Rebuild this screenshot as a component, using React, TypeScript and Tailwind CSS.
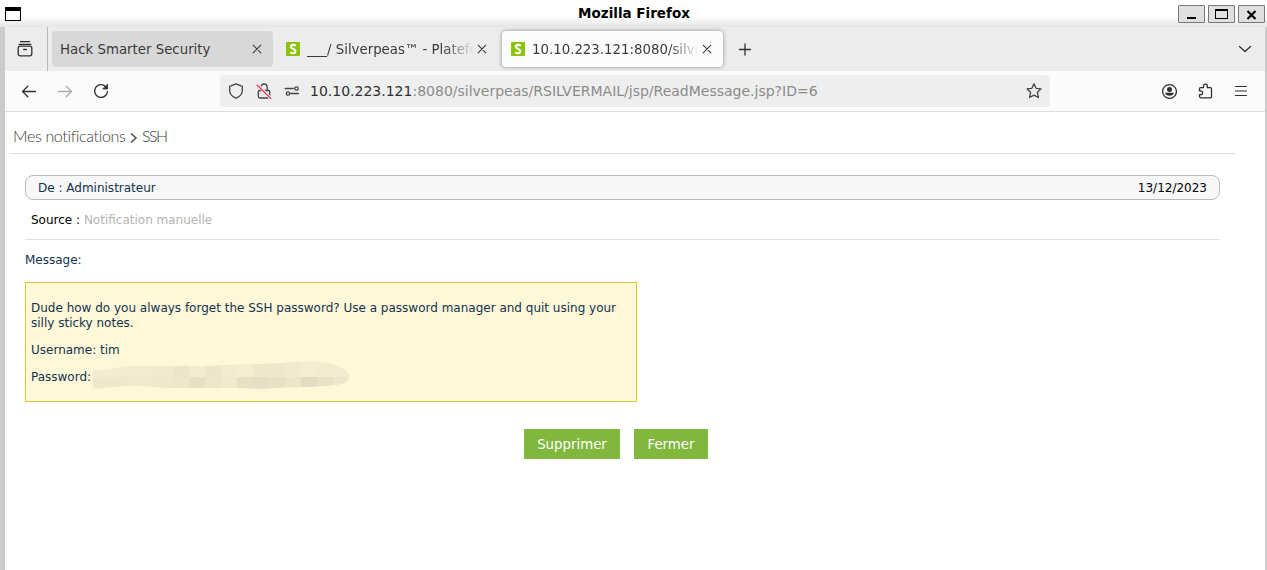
import type { ReactNode } from "react";

function Icon({ children, className = "", size = 16 }: { children: ReactNode; className?: string; size?: number }) {
  return (
    <svg
      width={size}
      height={size}
      viewBox="0 0 16 16"
      fill="none"
      stroke="currentColor"
      strokeWidth="1.3"
      strokeLinecap="round"
      strokeLinejoin="round"
      className={"shrink-0 " + className}
    >
      {children}
    </svg>
  );
}

function CloseIcon() {
  return (
    <Icon className="text-[#3c3c3c]">
      <path d="M4.2 4.2l7.6 7.6M11.8 4.2l-7.6 7.6" strokeWidth="1.1" />
    </Icon>
  );
}

function Favicon() {
  return (
    <svg width="14" height="14" viewBox="0 0 14 14" className="mr-[7px] shrink-0">
      <rect width="14" height="14" rx="1" fill="#8ac30a" />
      <path d="M9.800 3.700C8.300 2.400 4.900 2.500 4.900 4.700c0 2.300 4.700 2 4.600 4.500-.1 2.300-3.400 2.500-5.200 1.100" fill="none" stroke="#fff" strokeWidth="2.100" />
    </svg>
  );
}

function WindowButton({ children }: { children: ReactNode }) {
  return (
    <div className="h-[18px] w-[27px] rounded-[1px] border border-[#777] bg-[#e0e0e0]">
      <svg width="25" height="16" viewBox="0 0 25 16" fill="none" stroke="#000" shapeRendering="crispEdges">
        {children}
      </svg>
    </div>
  );
}

function TitleBar() {
  return (
    <header className="grid h-[27px] shrink-0 grid-cols-[1fr_auto_1fr] bg-linear-to-b from-white from-60% to-[#e4e4e4] pl-[5px] pr-[2px]">
      <div className="mt-[7px] h-[14px] w-[16px] border border-t-4 border-black bg-white" />
      <h1 className="-ml-[2px] pt-[5px] text-[13.500px] leading-4 font-bold text-black">Mozilla Firefox</h1>
      <div className="flex justify-end gap-[3px] pt-[5px]">
        <WindowButton>
          <path d="M8 12h9" strokeWidth="2" />
        </WindowButton>
        <WindowButton>
          <path d="M6.500 4v8.500h12V4" />
          <path d="M6 4h13" strokeWidth="2" />
        </WindowButton>
        <WindowButton>
          <path d="M8.500 5l8 8M16.500 5l-8 8" strokeWidth="2.200" shapeRendering="auto" />
        </WindowButton>
      </div>
    </header>
  );
}

function TabStrip() {
  return (
    <div className="flex h-[44px] shrink-0 items-center bg-[#ececec] text-[13.330px] text-[#3a3a3a]">
      <div className="flex h-full w-[43px] items-center border-r border-[#b8b8b8] pl-[12px]">
        <Icon className="text-[#303030]">
          <path d="M3.500 .7h9M2 3.300h12M3.200 5.200h9.600a2 2 0 012 2v5.600a2 2 0 01-2 2H3.200a2 2 0 01-2-2V7.200a2 2 0 012-2zM6.700 8.500h2.600" />
        </Icon>
      </div>
      <div className="ml-[4px] flex h-[36px] w-[221px] items-center rounded-[4px] bg-[#d8d8d8] pr-[8px] pl-[8px]">
        <span className="flex-1 pt-[2px] whitespace-nowrap">Hack Smarter Security</span>
        <CloseIcon />
      </div>
      <div className="ml-[4px] flex h-[36px] w-[221px] items-center pr-[8px] pl-[9px]">
        <Favicon />
        <span className="min-w-0 flex-1 overflow-hidden pt-[2px] whitespace-nowrap mask-[linear-gradient(to_right,black_82%,transparent)]">___/ Silverpeas™ - Platefo</span>
        <CloseIcon />
      </div>
      <div className="ml-[4px] flex h-[36px] w-[221px] items-center rounded-[4px] bg-[#fcfcfc] pr-[8px] pl-[9px] shadow-[0_0_4px_#00000066]">
        <Favicon />
        <span className="min-w-0 flex-1 overflow-hidden pt-[2px] whitespace-nowrap mask-[linear-gradient(to_right,black_82%,transparent)]">10.10.223.121:8080/silve</span>
        <CloseIcon />
      </div>
      <Icon className="ml-[14px] text-[#303030]">
        <path d="M2.500 8.500h11M8 3v11" />
      </Icon>
      <Icon className="mr-[12px] ml-auto text-[#303030]">
        <path d="M2.500 5.500l5.500 5 5.500-5" />
      </Icon>
    </div>
  );
}

function AddressBar() {
  return (
    <div className="flex h-[32px] w-[830px] items-center rounded-[4px] bg-[#eeeeee] pr-[8px] pl-[8px] text-[#444]">
      <Icon>
        <path d="M8 .8l6.300 2.500v4.200c0 3.500-2.800 6.300-6.300 7.700-3.500-1.400-6.300-4.200-6.300-7.700V3.300z" />
      </Icon>
      <Icon className="ml-[12px]">
        <path d="M4.800 7.500V4.200a3.200 3.200 0 016.400 0v3.300M3.500 7.500h9a1.200 1.200 0 011.200 1.200v4.600a1.700 1.700 0 01-1.700 1.700H4a1.700 1.700 0 01-1.700-1.700V8.700a1.200 1.200 0 011.200-1.200z" />
        <path d="M1.300 1.700l13.400 13.600" stroke="#eeeeee" strokeWidth="3" />
        <path d="M1.300 2.200l13.400 13.200" stroke="#ff2c58" />
      </Icon>
      <Icon className="ml-[12px]">
        <path d="M1.200 5.500h8M6.800 10.500h7.500" />
        <circle cx="12.500" cy="5.500" r="1.700" />
        <circle cx="4" cy="10.500" r="1.700" />
      </Icon>
      <p className="ml-[10px] flex-1 text-[14.000px] whitespace-nowrap text-[#8b8b8b]">
        <span className="text-[#303030]">10.10.223.121</span>:8080/silverpeas/RSILVERMAIL/jsp/ReadMessage.jsp?ID=6
      </p>
      <Icon>
        <path d="M8 .8l2.100 4.500 4.900.6-3.600 3.400 1 5.200L8 12.100l-4.400 2.400 1-5.200L1 5.900l4.900-.6z" />
      </Icon>
    </div>
  );
}

function Toolbar() {
  return (
    <div className="flex h-[41px] shrink-0 items-center border-b border-[#dedede] bg-[#fbfbfb] pl-[16px] text-[#303030]">
      <Icon>
        <path d="M14.500 8.500h-13M6.800 3.200L1.500 8.500l5.300 5.300" />
      </Icon>
      <Icon className="ml-[20px] text-[#ababab]">
        <path d="M1.500 8.500h13M9.200 3.200l5.300 5.300-5.300 5.300" />
      </Icon>
      <Icon className="ml-[20px]">
        <path d="M12.900 3.900A6.400 6.400 0 1014.400 8.500" />
        <path d="M14.500 1.500v4.500h-4.500z" fill="currentColor" strokeWidth=".8" />
      </Icon>
      <div className="ml-[111px]">
        <AddressBar />
      </div>
      <div className="mr-[16px] ml-auto flex gap-[20px]">
        <Icon>
          <circle cx="8.500" cy="8.500" r="6.900" />
          <circle cx="8.500" cy="6.400" r="2.500" fill="currentColor" stroke="none" />
          <path d="M4.200 9.800h8.600c0 3.800-8.600 3.800-8.600 0z" fill="currentColor" stroke="none" />
        </Icon>
        <Icon>
          <path d="M6.500 4.700V3a1.900 1.900 0 013.800 0v1.700h3.200a1 1 0 011 1v8.100a1 1 0 01-1 1H4a1.500 1.500 0 01-1.500-1.500v-1.700h1.300a1.900 1.900 0 000-3.800H2.500V5.700a1 1 0 011-1z" />
        </Icon>
        <Icon>
          <path d="M2.500 3.500h11M2.500 8h11M2.500 12.500h11" strokeWidth="1.200" />
        </Icon>
      </div>
    </div>
  );
}

const SHADES = [
  ["#f2ecd0", "#eee9cd"],
  ["#f2ecd0", "#eee9cd"],
  ["#f2ecd0", "#efeacd"],
  ["#f1ebcf", "#efeacd"],
  ["#f0eace", "#eee9cd"],
  ["#ebe6ca", "#ece7cb"],
  ["#f2ecd0", "#e6e0c5"],
  ["#ebe6ca", "#ece6ca"],
  ["#f1ebcf", "#efe9cd"],
  ["#f4eed1", "#e6e1c5"],
  ["#ede8cc", "#e5e0c5"],
  ["#ede7cb", "#e7e1c6"],
  ["#f0eace", "#ebe5ca"],
  ["#f3edd1", "#e1dcc1"],
  ["#f1ebcf", "#e7e2c7"],
  ["#f2ecd0", "#ece7cb"],
  ["#f2ecd0", "#ece7cb"],
];

function RedactedValue() {
  return (
    <svg width="256" height="28" viewBox="93 361 256 28" className="ml-[2px]">
      <clipPath id="stroke-area">
        <path d="M95 370h12c9-1 8-3 21-4h77c26-1 28-2 52-2 30-1 40-3 62-2 14 1 29 7 30 13 0 5-2 8-8 9-9 2-20 2-35 3-20 0-42 3-66 1h-75c-17-2-35-3-49-1-12 0-10 2-22 1.500-7-2-8-12-2-18.500z" />
      </clipPath>
      <g clipPath="url(#stroke-area)" shapeRendering="crispEdges">
        {SHADES.map(([top, bottom], i) => (
          <g key={i}>
            <rect x={93 + i * 16} y="360" width="16" height="17" fill={top} />
            <rect x={93 + i * 16} y="377" width="16" height="13" fill={bottom} />
          </g>
        ))}
      </g>
    </svg>
  );
}

function MessagePage() {
  return (
    <main className="flex-1 bg-white text-[12px] leading-[15px] text-[#12324e]">
      <nav className="ml-[5px] flex h-[42px] w-[1225px] border-b border-[#dcdcdc] pt-[14px] pl-[3px] font-[Lato] text-[16px] leading-[20px] font-light whitespace-pre text-[#3c3c3c]">
        <span className="w-[113px] tracking-[-0.340px]">Mes notifications</span>
        <svg width="16" height="20" viewBox="0 0 16 20" fill="none" stroke="#555" strokeWidth="1.600">
          <path d="M5 7.500l5 4.500-5 4.500" />
        </svg>
        <span className="tracking-[-1.600px]">SSH</span>
      </nav>
      <section className="ml-[20px] w-[1195px]">
        <div className="mt-[21px] flex h-[25px] items-center justify-between rounded-[8px] border border-[#bababa] bg-[#f7f7f7] px-[12px] pt-[2px]">
          <span>De : Administrateur</span>
          <time className="text-black">13/12/2023</time>
        </div>
        <div className="h-[40px] border-b border-[#e2e2e2] pt-[13px] pl-[6px] text-black">
          Source : <span className="text-[#b4b4b4]">Notification manuelle</span>
        </div>
        <h2 className="pt-[13px]">Message:</h2>
        <div className="mt-[14px] h-[120px] w-[612px] border border-[#e0c92e] bg-[#fff8d8] pt-[18px] pl-[5px]">
          <p className="w-[595px]">
            Dude how do you always forget the SSH password? Use a password manager and quit using your
            <br />
            silly sticky notes.
          </p>
          <p className="mt-[12px]">Username: tim</p>
          <div className="mt-[3px] flex h-[28px]">
            <p className="pt-[9px]">Password:</p>
            <RedactedValue />
          </div>
        </div>
        <div className="mt-[27px] ml-[499px] flex gap-[14px] text-[13.330px] text-white">
          <button className="h-[30px] w-[96px] bg-[#80b73c]">Supprimer</button>
          <button className="h-[30px] w-[74px] bg-[#80b73c]">Fermer</button>
        </div>
      </section>
    </main>
  );
}

export default function App() {
  return (
    <div className="flex h-[570px] w-[1267px] flex-col overflow-hidden bg-white font-['DejaVu_Sans',sans-serif]">
      <TitleBar />
      <div className="flex min-h-0 flex-1 flex-col border-r-2 border-l-[5px] border-[#cbcbcb]">
        <TabStrip />
        <Toolbar />
        <MessagePage />
      </div>
    </div>
  );
}
